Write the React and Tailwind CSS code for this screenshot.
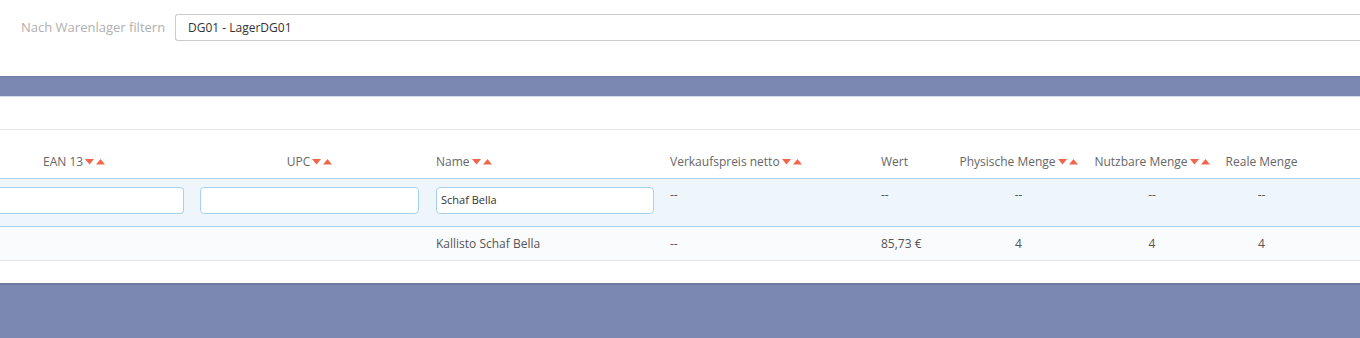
import React from 'react';

function SortArrows() {
  return (
    <span className="inline-flex items-center gap-[2px] ml-[2px] align-middle">
      <svg width="9" height="6" viewBox="0 0 9 6">
        <polygon points="0,0 9,0 4.5,5.5" fill="#f0674b" />
      </svg>
      <svg width="9" height="6" viewBox="0 0 9 6">
        <polygon points="0,5.5 9,5.5 4.5,0" fill="#f0674b" />
      </svg>
    </span>
  );
}

const cols = [
  { w: 'w-[192px]', head: 'EAN 13', sort: true, align: 'justify-start pl-[43px]' },
  { w: 'w-[235px]', head: 'UPC', sort: true, align: 'justify-center' },
  { w: 'w-[235px]', head: 'Name', sort: true, align: 'justify-start pl-[9px]' },
  { w: 'w-[211px]', head: 'Verkaufspreis netto', sort: true, align: 'justify-start pl-2' },
  { w: 'w-[78px]', head: 'Wert', sort: false, align: 'justify-start pl-2' },
  { w: 'w-[135px]', head: 'Physische Menge', sort: true, align: 'justify-center' },
  { w: 'w-[132px]', head: 'Nutzbare Menge', sort: true, align: 'justify-center' },
  { w: 'w-[87px]', head: 'Reale Menge', sort: false, align: 'justify-center' },
];

export default function App() {
  return (
    <div className="w-[1360px] h-[338px] overflow-hidden bg-white text-[12px] text-[#555]" style={{ fontFamily: '"Open Sans", "Liberation Sans", sans-serif' }}>
      <div className="h-[76px] flex items-start pt-[14px]">
        <label className="pl-[21px] w-[175px] h-[27px] flex items-center text-[13px] text-[#b0b0b0]">Nach Warenlager filtern</label>
        <div className="flex-1 h-[27px] border border-[#cccccc] border-r-0 rounded-l-[3px] flex items-center pl-[12px] text-[#333]">
          DG01 - LagerDG01
        </div>
      </div>
      <div className="h-[21px] bg-[#7b88b1] border-t border-[#6f7ca3] border-b border-b-[#d3dbec]"></div>
      <div className="h-[33px] border-b border-[#e6e6e6]"></div>

      <div className="flex h-[48px] items-end pb-[7px]">
        {cols.map((c) => (
          <div key={c.head} className={`${c.w} flex items-center ${c.align} text-[#666]`}>
            <span>{c.head}</span>
            {c.sort && <SortArrows />}
          </div>
        ))}
      </div>

      <div className="flex h-[49px] bg-[#eef6fc] border-t border-b border-[#a5d3ef]">
        <div className="w-[192px] pr-2 pt-[8px]">
          <div className="h-[27px] bg-white border border-l-0 border-[#a5d3ef] rounded-r-[4px]"></div>
        </div>
        <div className="w-[235px] px-2 pt-[8px]">
          <div className="h-[27px] bg-white border border-[#a5d3ef] rounded-[4px]"></div>
        </div>
        <div className="w-[235px] pl-[9px] pr-2 pt-[8px]">
          <div className="h-[27px] bg-white border border-[#a5d3ef] rounded-[4px] flex items-center pl-[4px] text-[11px] text-[#333]">Schaf Bella</div>
        </div>
        <div className="w-[211px] pl-2 pt-[7px]">--</div>
        <div className="w-[78px] pl-2 pt-[7px]">--</div>
        <div className="w-[135px] text-center pt-[7px]">--</div>
        <div className="w-[132px] text-center pt-[7px]">--</div>
        <div className="w-[87px] text-center pt-[7px]">--</div>
      </div>

      <div className="flex h-[34px] items-center bg-[#fafbfd] border-b border-[#e8e8e8]">
        <div className="w-[192px]"></div>
        <div className="w-[235px]"></div>
        <div className="w-[235px] pl-[9px]">Kallisto Schaf Bella</div>
        <div className="w-[211px] pl-2">--</div>
        <div className="w-[78px] pl-2">85,73 €</div>
        <div className="w-[135px] text-center">4</div>
        <div className="w-[132px] text-center">4</div>
        <div className="w-[87px] text-center">4</div>
      </div>

      <div className="h-[22px]"></div>
      <div className="h-[56px] bg-[#7b88b1] border-t-2 border-[#6c789d]"></div>
    </div>
  );
}
